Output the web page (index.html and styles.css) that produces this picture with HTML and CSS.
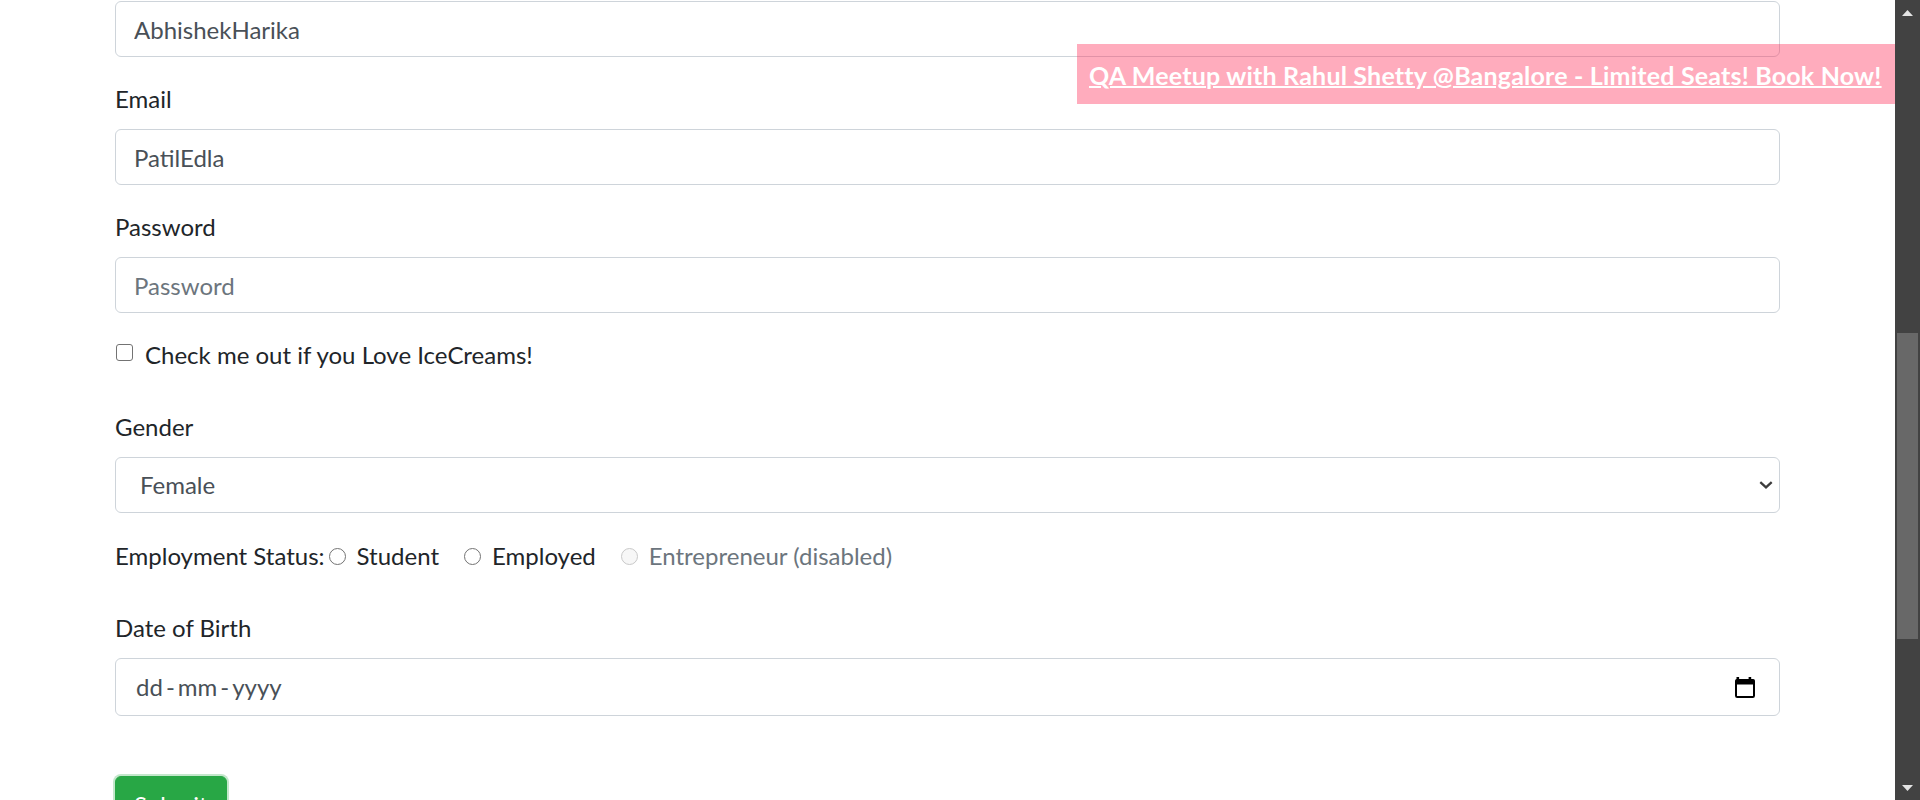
FILE: index.html
```html
<!DOCTYPE html>
<html lang="en">
<head>
<meta charset="utf-8">
<title>Form</title>
<link rel="stylesheet" href="styles.css">
</head>
<body>
<div class="viewport">
  <main class="page">
    <div class="container">
      <form class="form">
        <div class="group">
          <input class="control" type="text" value="AbhishekHarika">
        </div>
        <div class="group">
          <label class="label">Email</label>
          <input class="control" type="text" value="PatilEdla">
        </div>
        <div class="group">
          <label class="label">Password</label>
          <input class="control" type="password" placeholder="Password">
        </div>
        <div class="check-group">
          <input class="checkbox" type="checkbox">
          <label class="check-label">Check me out if you Love IceCreams!</label>
        </div>
        <div class="group">
          <label class="label">Gender</label>
          <div class="select-wrap">
            <select class="control select"><option>Female</option><option>Male</option></select>
            <svg class="chevron" width="14" height="8" viewBox="0 0 14 8"><polyline points="1.3,1.2 7,6.4 12.7,1.2" fill="none" stroke="#3c3c3c" stroke-width="2.3"/></svg>
          </div>
        </div>
        <div class="radio-row">
          <span class="radio-title">Employment Status:</span>
          <span class="radio-item"><input class="radio" type="radio" name="emp"><label class="radio-label">Student</label></span>
          <span class="radio-item"><input class="radio" type="radio" name="emp"><label class="radio-label">Employed</label></span>
          <span class="radio-item disabled"><input class="radio" type="radio" name="emp" disabled><label class="radio-label">Entrepreneur (disabled)</label></span>
        </div>
        <div class="group">
          <label class="label">Date of Birth</label>
          <div class="control date">
            <span class="date-text"><span>dd</span><span class="sep">-</span><span>mm</span><span class="sep">-</span><span>yyyy</span></span>
            <svg class="cal" width="20" height="21" viewBox="0 0 20 21">
              <rect x="1.5" y="0" width="2.6" height="4" fill="#000"/>
              <rect x="13.6" y="0" width="2.6" height="4" fill="#000"/>
              <rect x="1" y="3" width="18" height="17" rx="1.2" fill="none" stroke="#000" stroke-width="2"/>
              <rect x="0.5" y="2.5" width="19" height="5" rx="1" fill="#000"/>
            </svg>
          </div>
        </div>
        <button class="btn" type="button">Submit</button>
      </form>
    </div>
    <a class="banner" href="#">QA Meetup with Rahul Shetty @Bangalore - Limited Seats! Book Now!</a>
  </main>
  <div class="scrollbar">
    <div class="sb-btn"><svg width="11" height="6" viewBox="0 0 11 6"><polygon points="0,6 5.5,0 11,6" fill="#e4e4e4"/></svg></div>
    <div class="sb-track"><div class="sb-thumb"></div></div>
    <div class="sb-btn"><svg width="11" height="6" viewBox="0 0 11 6"><polygon points="0,0 5.5,6 11,0" fill="#e4e4e4"/></svg></div>
  </div>
</div>
</body>
</html>
```
FILE: styles.css
```css
* { box-sizing: border-box; }
html, body {
  margin: 0;
  padding: 0;
  height: 800px;
  overflow: hidden;
  background: #fff;
}
body {
  font-family: Lato, "Noto Sans", sans-serif;
  font-size: 24px;
  line-height: 36px;
  color: #212529;
}
.viewport {
  display: flex;
  height: 800px;
}
.page {
  flex: 1;
  position: relative;
  overflow: hidden;
}
.container {
  width: 1665px;
  margin: 0 auto;
  padding-top: 1px;
}
.form {
  display: flex;
  flex-direction: column;
}
.group {
  display: flex;
  flex-direction: column;
  margin-bottom: 24px;
}
.label {
  display: block;
  height: 36px;
  margin-bottom: 12px;
}
.control {
  display: block;
  width: 100%;
  height: 56px;
  margin: 0;
  padding: 0 18px;
  font: inherit;
  line-height: 36px;
  color: #495057;
  background: #fff;
  border: 1px solid #ced4da;
  border-radius: 6px;
  outline: none;
}
.control::placeholder { color: #6c757d; opacity: 1; }

.check-group {
  display: flex;
  align-items: flex-start;
  height: 36px;
  margin-bottom: 36px;
}
.checkbox {
  appearance: none;
  -webkit-appearance: none;
  width: 17px;
  height: 17px;
  margin: 7px 12px 0 1px;
  border: 1.5px solid #737373;
  border-radius: 3px;
  background: #fff;
}

.select-wrap {
  position: relative;
}
.select {
  appearance: none;
  -webkit-appearance: none;
  padding-left: 24px;
}
.chevron {
  position: absolute;
  right: 7px;
  top: 24px;
  pointer-events: none;
}

.radio-row {
  display: flex;
  align-items: center;
  height: 36px;
  margin-top: 1px;
  margin-bottom: 36px;
}
.radio-item {
  display: flex;
  align-items: center;
  margin-right: 21px;
}
.radio {
  appearance: none;
  -webkit-appearance: none;
  width: 17px;
  height: 17px;
  margin: 0 11px 0 4px;
  border: 1.3px solid #737373;
  border-radius: 50%;
  background: #fff;
}
.radio-item.disabled .radio {
  border-color: #c9c9c9;
  background: #f7f7f7;
}
.radio-item.disabled .radio-label { color: #6c757d; }

.date {
  display: flex;
  align-items: center;
  justify-content: space-between;
  height: 58px;
  padding: 0 24px 0 20px;
  color: #495057;
}
.date-text .sep { padding: 0 3px; }
.cal { display: block; }

.btn {
  align-self: flex-start;
  margin-top: 36px;
  height: 57px;
  padding: 0 18px;
  font: inherit;
  line-height: 36px;
  color: #fff;
  background: #28a745;
  border: 1px solid #28a745;
  border-radius: 6px;
  box-shadow: 0 0 0 2px #c3e7cb;
}

.banner {
  position: absolute;
  top: 44px;
  left: 1077px;
  right: 0;
  height: 60px;
  padding: 0 12px;
  font-weight: 700;
  font-size: 25px;
  letter-spacing: 0.2px;
  line-height: 62px;
  color: #fff;
  white-space: nowrap;
  text-decoration: underline;
  text-decoration-thickness: 2px;
  background: rgba(255, 48, 90, 0.4);
}

.scrollbar {
  width: 25px;
  display: flex;
  flex-direction: column;
  background: #424242;
}
.sb-btn {
  height: 25px;
  display: flex;
  align-items: center;
  justify-content: center;
}
.sb-track {
  flex: 1;
  padding: 0 2px;
}
.sb-thumb {
  margin-top: 308px;
  height: 306px;
  background: #686868;
}
```
